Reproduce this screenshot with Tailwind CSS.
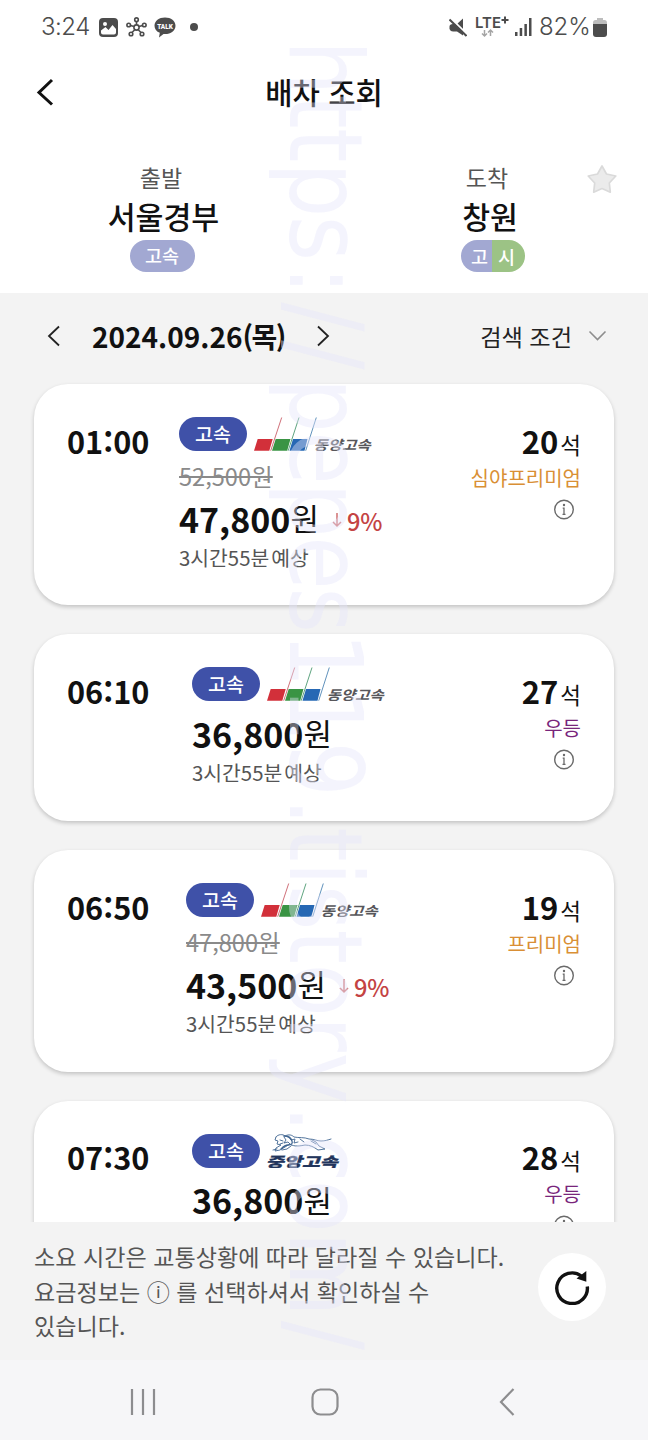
<!DOCTYPE html>
<html lang="ko">
<head>
<meta charset="utf-8">
<title>배차 조회</title>
<script src="https://cdn.jsdelivr.net/npm/@tailwindcss/browser@4"></script>
</head>
<body class="bg-white">
<svg class="hidden">
  <symbol id="dongyang" viewBox="0 0 118 34">
    <path d="M3.700 22h15L15.300 33.700H0z" fill="#d2303a"/>
    <path d="M21.700 22h14.800L33.200 33.700H18z" fill="#3a9444"/>
    <path d="M39 22h14.500L50.500 33.700H35.500z" fill="#2668b4"/>
    <path d="M27.700 .5 16.700 33.700" stroke="#c9606a" stroke-width=".9"/>
    <path d="M45 .5 34.200 33.700" stroke="#4d9a72" stroke-width=".9"/>
    <path d="M62.300 .5 51.700 33.700" stroke="#4f86b4" stroke-width=".9"/>
    <text transform="translate(59.500 32.500) skewX(-18)" font-family="Noto Sans CJK KR, sans-serif" font-size="13.500" font-weight="700" textLength="57" lengthAdjust="spacingAndGlyphs" fill="#57575b">동양고속</text>
  </symbol>
  <symbol id="jungang" viewBox="0 0 74 34">
    <g fill="none" stroke="#3f6591" stroke-width="0.900" stroke-linecap="round" stroke-linejoin="round">
      <path d="M10 3c2-3 7-3 9-1 4-2 7-1 9 1 5 1 10 0 15 2 5 0 8 2 12 2 4 0 7-1 10-2"/>
      <path d="M10 3 9 6l3 1-1 3 4 1-5 3-1 3 5-1 5-3 5-3c4 3 10 2 15 1 5 0 9 2 13 5l7-1-6-3-3-4-4-2"/>
      <path d="m18 3 2 3-2 3 4-1 3 3m-2-8 2 3 4-1-1 4 4-1m-18-2 3 1m-3 3 3-1M34 5l4 3m7-1 5 3m-39 5-4 1m18-4-4 3-5 1"/>
      <path d="M18 2c4 0 7 2 8 5s-1 4-4 4-5 2-7 4" stroke-width="1.300"/>
    </g>
    <text transform="translate(0 33) skewX(-16)" font-family="Noto Sans CJK KR, sans-serif" font-size="14" font-weight="900" textLength="72" lengthAdjust="spacingAndGlyphs" fill="#22355c" stroke="#22355c" stroke-width=".3">중앙고속</text>
  </symbol>
  <symbol id="info" viewBox="0 0 22 22">
    <circle cx="11" cy="10.500" r="9.300" fill="none" stroke="#6a6a6a" stroke-width="1.400"/>
    <circle cx="11" cy="6" r="1.200" fill="#6a6a6a"/>
    <path d="M9.700 9.200H11v6M9.500 15.300h3" fill="none" stroke="#6a6a6a" stroke-width="1.300"/>
  </symbol>
  <symbol id="down" viewBox="0 0 10 16">
    <path d="M5 1v13M1 10l4 4 4-4" fill="none" stroke="#cf7070" stroke-width="1.500"/>
  </symbol>
</svg>

<div class="relative flex h-[1440px] w-[648px] flex-col overflow-hidden bg-white font-['Noto_Sans_CJK_KR',sans-serif] text-[#111] whitespace-nowrap">

  <!-- status bar -->
  <div class="flex h-[54px] shrink-0 items-center pl-[41px] pr-[41px] font-[Inter,sans-serif] text-[#4c4c4c]">
    <span class="w-[49px] font-[Inter,sans-serif] text-[24px] font-light leading-[54px] tracking-[-0.5px]">3:24</span>
    <svg class="ml-[9px]" width="19" height="19" viewBox="0 0 19 19"><rect width="19" height="19" rx="4" fill="#4c4c4c"/><circle cx="6" cy="6" r="2" fill="#fff"/><path d="m2 12.500 4.500-3.500 3 3 4-5 3.500 4v3.500q0 2-2 2H4q-2 0-2-2z" fill="#fff"/></svg>
    <svg class="ml-[8px]" width="21" height="20" viewBox="0 0 21 20" fill="none" stroke="#4c4c4c" stroke-width="1.600"><circle cx="10.500" cy="10.500" r="2.600"/><circle cx="10.500" cy="2.700" r="1.800"/><circle cx="2.700" cy="8" r="1.800"/><circle cx="18.300" cy="8" r="1.800"/><circle cx="5" cy="17" r="1.800"/><circle cx="16" cy="17" r="1.800"/><path d="M10.500 4.500V8M4.500 8.500l3.500 1M16.500 8.500l-3.500 1M6 15.500l3-3M15 15.500l-3-3"/></svg>
    <svg class="ml-[7px]" width="22" height="21" viewBox="0 0 22 21"><path d="M11 .5c6 0 10.500 3.500 10.500 8.200S17 17 11 17l-1.500-.1L5 20.500l.8-4.700C2.500 14.500.5 11.800.5 8.700.5 4 5 .5 11 .5" fill="#4c4c4c"/><text x="3.200" y="11.700" font-family="Roboto, sans-serif" font-weight="900" font-size="8" textLength="15.600" lengthAdjust="spacingAndGlyphs" fill="#fff">TALK</text></svg>
    <div class="ml-[14px] size-[8px] rounded-full bg-[#4c4c4c]"></div>
    <div class="grow"></div>
    <svg width="18" height="19" viewBox="0 0 18 19"><path d="M14 .5v17L8 13.500H4q-2.500 0-3.500-2.500V8.500Q.5 6 4 6h4z" fill="#4c4c4c"/><path d="M1.500 0 19 17" stroke="#fff" stroke-width="2"/><path d="m.5 1.500 17 16.500" stroke="#4c4c4c" stroke-width="2"/></svg>
    <svg class="ml-[8px] mt-[-1px]" width="35" height="24" viewBox="0 0 35 24"><text x="0" y="13" font-family="Inter, sans-serif" font-size="15" font-weight="600" textLength="26" lengthAdjust="spacingAndGlyphs" fill="#4c4c4c">LTE</text><path d="M30 1.500v7M26.500 5h7" stroke="#4c4c4c" stroke-width="2"/><path d="M9.500 15v6M7 18.500l2.500 2.500 2.500-2.500M15.500 21v-6M13 17.500l2.500-2.500 2.500 2.500" fill="none" stroke="#a5a5a5" stroke-width="1.500"/></svg>
    <svg class="ml-[5px]" width="17" height="18" viewBox="0 0 17 18" fill="#4c4c4c"><path d="M0 14h2.500v4H0zM4.700 10h2.500v8H4.700zM9.400 6h2.500v12H9.400zM14 0h2.500v18H14z"/></svg>
    <span class="ml-[7px] w-[52px] font-[Inter,sans-serif] text-[24px] font-light leading-[54px] tracking-[-0.1px]">82%</span>
    <svg class="ml-[2px]" width="14" height="19" viewBox="0 0 14 19"><path d="M4 0h6v2h1.500Q14 2 14 5v2H0V5q0-3 2.500-3H4z" fill="#bdbdbd"/><path d="M0 6h14v10q0 3-3 3H3q-3 0-3-3z" fill="#4c4c4c"/></svg>
  </div>

  <!-- title -->
  <header class="grid h-[76px] shrink-0 grid-cols-[1fr_auto_1fr] items-center">
    <svg class="ml-[36px]" width="18" height="28" viewBox="0 0 18 28"><path d="M16 2 3 14.500 16 26.500" fill="none" stroke="#111" stroke-width="3"/></svg>
    <h1 class="text-[29.700px] font-medium leading-[76px]">배차 조회</h1>
  </header>

  <!-- route -->
  <section class="flex h-[163px] shrink-0 pt-[29px]">
    <div class="flex w-[324px] flex-col items-center">
      <div class="mr-[2px] text-[23px] leading-[36px] text-[#555]">출발</div>
      <div class="mr-[-3px] text-[30.300px] font-medium leading-[43px]">서울경부</div>
      <div class="mt-[2px] flex h-[32px] w-[65px] items-center justify-center rounded-full bg-[#a2a8d2] text-[18.500px] font-medium text-white">고속</div>
    </div>
    <div class="flex w-[324px] justify-between">
      <div class="ml-[131px] flex w-[76px] flex-col items-center">
        <div class="mr-[12px] text-[23px] leading-[36px] text-[#555]">도착</div>
        <div class="mr-[6px] text-[30.300px] font-medium leading-[43px]">창원</div>
        <div class="mt-[2px] flex h-[32px] w-[64px] overflow-hidden rounded-full text-[18.500px] font-medium leading-[32px] text-white">
          <div class="w-[31px] bg-[#a2a8d2] pl-[10px]">고</div>
          <div class="w-[33px] bg-[#9cc385] pl-[6px]">시</div>
        </div>
      </div>
      <svg class="mr-[30px] mt-[5px]" width="32" height="30" viewBox="0 0 32 30"><path d="m16 2 4.500 8 9.300 2-6.500 7 1 9.200-8.300-3.700-8.300 3.700 1-9.200-6.500-7 9.300-2z" fill="#ebebeb" stroke="#dadada" stroke-width="1.700" stroke-linejoin="round"/></svg>
    </div>
  </section>

  <main class="flex h-[929px] shrink-0 flex-col overflow-hidden bg-[#f3f3f3]">
    <!-- date selector -->
    <div class="flex h-[91px] shrink-0 items-center pb-[6px] pl-[47px] pr-[41px]">
      <svg width="14" height="22" viewBox="0 0 14 22"><path d="M12 1.500 2 11l10 9.500" fill="none" stroke="#222" stroke-width="1.800"/></svg>
      <div class="ml-[31px] w-[194px] text-[28px] font-bold leading-[40px]">2024.09.26<span class="tracking-[-1.500px]">(목)</span></div>
      <svg class="ml-[30px]" width="14" height="22" viewBox="0 0 14 22"><path d="m2 1.500 10 9.500-10 9.500" fill="none" stroke="#222" stroke-width="1.800"/></svg>
      <div class="ml-auto text-[23.200px] leading-[40px] text-[#222]">검색 조건</div>
      <svg class="ml-[16px]" width="19" height="12" viewBox="0 0 19 12"><path d="m1.500 1.500 8 8 8-8" fill="none" stroke="#8d8d8d" stroke-width="1.600"/></svg>
    </div>

    <!-- departures -->
    <div class="flex flex-col gap-[29px] px-[34px]">
      <article class="flex h-[221px] shrink-0 rounded-[34px] bg-white pl-[33px] pr-[33px] pt-[33px] shadow-[0_2px_4px_rgba(0,0,0,0.2)]">
        <div class="w-[112px] text-[30.700px] font-bold leading-[47px]">01:00</div>
        <div>
          <div class="flex h-[34px] gap-[7px]">
            <span class="w-[68px] rounded-full bg-[#3f51a8] text-center text-[19.500px] font-medium leading-[34px] text-white">고속</span>
            <svg width="118" height="34"><use href="#dongyang"/></svg>
          </div>
          <div class="mt-[7px] text-[23.600px] leading-[36px] text-[#8a8a8a] line-through">52,500원</div>
          <div class="flex h-[48px] items-center"><b class="text-[34px] font-bold">47,800</b><span class="text-[31px]">원</span>
            <svg class="ml-[13px] mt-[4px]" width="10" height="16"><use href="#down"/></svg><span class="ml-[5px] mt-[7px] text-[23.600px] font-medium text-[#c44343]">9%</span></div>
          <div class="mt-[1px] text-[20.400px] leading-[28px] text-[#555]">3시간55분<span class="ml-[2px]">예상</span></div>
        </div>
        <div class="ml-auto flex flex-col items-end">
          <div class="flex h-[43px] items-baseline gap-[2px] leading-[47px]"><b class="text-[31px] font-bold">20</b><span class="text-[22.500px]">석</span></div>
          <div class="text-[20px] leading-[36px] text-[#d98f35]">심야프리미엄</div>
          <svg class="mr-[6px] mt-[3px]" width="22" height="22"><use href="#info"/></svg>
        </div>
      </article>

      <article class="flex h-[187px] shrink-0 rounded-[34px] bg-white pl-[33px] pr-[33px] pt-[33px] shadow-[0_2px_4px_rgba(0,0,0,0.2)]">
        <div class="w-[125px] text-[30.700px] font-bold leading-[47px]">06:10</div>
        <div>
          <div class="flex h-[34px] gap-[7px]">
            <span class="w-[68px] rounded-full bg-[#3f51a8] text-center text-[19.500px] font-medium leading-[34px] text-white">고속</span>
            <svg width="118" height="34"><use href="#dongyang"/></svg>
          </div>
          <div class="mt-[7px] flex h-[50px] items-center"><b class="text-[34px] font-bold">36,800</b><span class="text-[31px]">원</span></div>
          <div class="text-[20.400px] leading-[28px] text-[#555]">3시간55분<span class="ml-[2px]">예상</span></div>
        </div>
        <div class="ml-auto flex flex-col items-end">
          <div class="flex h-[43px] items-baseline gap-[2px] leading-[47px]"><b class="text-[31px] font-bold">27</b><span class="text-[22.500px]">석</span></div>
          <div class="text-[20px] leading-[36px] text-[#78257b]">우등</div>
          <svg class="mr-[6px] mt-[3px]" width="22" height="22"><use href="#info"/></svg>
        </div>
      </article>

      <article class="flex h-[222px] shrink-0 rounded-[34px] bg-white pl-[33px] pr-[33px] pt-[33px] shadow-[0_2px_4px_rgba(0,0,0,0.2)]">
        <div class="w-[119px] text-[30.700px] font-bold leading-[47px]">06:50</div>
        <div>
          <div class="flex h-[34px] gap-[7px]">
            <span class="w-[68px] rounded-full bg-[#3f51a8] text-center text-[19.500px] font-medium leading-[34px] text-white">고속</span>
            <svg width="118" height="34"><use href="#dongyang"/></svg>
          </div>
          <div class="mt-[7px] text-[23.600px] leading-[36px] text-[#8a8a8a] line-through">47,800원</div>
          <div class="flex h-[48px] items-center"><b class="text-[34px] font-bold">43,500</b><span class="text-[31px]">원</span>
            <svg class="ml-[13px] mt-[4px]" width="10" height="16"><use href="#down"/></svg><span class="ml-[5px] mt-[7px] text-[23.600px] font-medium text-[#c44343]">9%</span></div>
          <div class="mt-[1px] text-[20.400px] leading-[28px] text-[#555]">3시간55분<span class="ml-[2px]">예상</span></div>
        </div>
        <div class="ml-auto flex flex-col items-end">
          <div class="flex h-[43px] items-baseline gap-[2px] leading-[47px]"><b class="text-[31px] font-bold">19</b><span class="text-[22.500px]">석</span></div>
          <div class="text-[20px] leading-[36px] text-[#d98f35]">프리미엄</div>
          <svg class="mr-[6px] mt-[3px]" width="22" height="22"><use href="#info"/></svg>
        </div>
      </article>

      <article class="flex h-[187px] shrink-0 rounded-[34px] bg-white pl-[33px] pr-[33px] pt-[33px] shadow-[0_2px_4px_rgba(0,0,0,0.2)]">
        <div class="w-[125px] text-[30.700px] font-bold leading-[46px]">07:30</div>
        <div>
          <div class="flex h-[34px] gap-[6px]">
            <span class="w-[68px] rounded-full bg-[#3f51a8] text-center text-[19.500px] font-medium leading-[34px] text-white">고속</span>
            <svg class="overflow-visible" width="74" height="34"><use href="#jungang"/></svg>
          </div>
          <div class="mt-[7px] flex h-[50px] items-center leading-[40px]"><b class="text-[34px] font-bold">36,800</b><span class="text-[31px]">원</span></div>
        </div>
        <div class="ml-auto flex flex-col items-end">
          <div class="flex h-[42px] items-baseline gap-[2px] leading-[46px]"><b class="text-[31px] font-bold">28</b><span class="text-[22.500px]">석</span></div>
          <div class="text-[20px] leading-[36px] text-[#78257b]">우등</div>
          <svg class="mr-[6px] mt-[3px]" width="22" height="22"><use href="#info"/></svg>
        </div>
      </article>
    </div>
  </main>

  <!-- notice -->
  <footer class="flex h-[138px] shrink-0 justify-between bg-[#f3f3f3] pl-[34px] pr-[42px] pt-[17px]">
    <p class="text-[23.100px] leading-[34.500px] text-[#555]">소요 시간은 교통상황에 따라 달라질 수 있습니다.<br>요금정보는 ⓘ 를 선택하셔서 확인하실 수<br>있습니다.</p>
    <div class="mt-[14px] flex size-[68px] items-center justify-center rounded-full bg-white">
      <svg width="36" height="36" viewBox="0 0 36 36"><path d="M33.300 17.500a15.300 15.300 0 1 1-6-10.500" fill="none" stroke="#111" stroke-width="3.400"/><path d="M32.300 2v10.700L22.500 9.500z" fill="#111"/></svg>
    </div>
  </footer>

  <!-- system navigation -->
  <nav class="flex h-[80px] shrink-0 items-center bg-[#f6f6f8] pl-[130px]">
    <svg class="mt-[3px]" width="26" height="26" viewBox="0 0 26 26"><path d="M2 0v26M13 0v26M24 0v26" stroke="#8d8d8f" stroke-width="2.200"/></svg>
    <svg class="ml-[155px] mt-[3px]" width="28" height="28" viewBox="0 0 28 28"><rect x="1.500" y="1.500" width="25" height="25" rx="8" fill="none" stroke="#8d8d8f" stroke-width="2.200"/></svg>
    <svg class="ml-[160px] mt-[3px]" width="16" height="28" viewBox="0 0 16 28"><path d="M14.500 1 2 14l12.500 13" fill="none" stroke="#8d8d8f" stroke-width="2.200"/></svg>
  </nav>

  <!-- watermark, one x position per letter -->
  <svg class="pointer-events-none absolute inset-0" width="648" height="1440"><text transform="translate(289.500 40) rotate(90) scale(.86 1)" font-family="DejaVu Sans, sans-serif" font-size="101" x="0 63.300 102.700 142.100 204.400 262.500 305 349 392.700 455 514.600 576.900 636.500 688.600 752.200 815.800 881.400 915.800 955.200 982.600 1034.700 1074.100 1134.800 1177.500 1238.700 1273.100 1325.200 1385.900 1489.200" fill="#e4e4fa" fill-opacity=".42">https://pepes119.tistory.com/</text></svg>
</div>
</body>
</html>
